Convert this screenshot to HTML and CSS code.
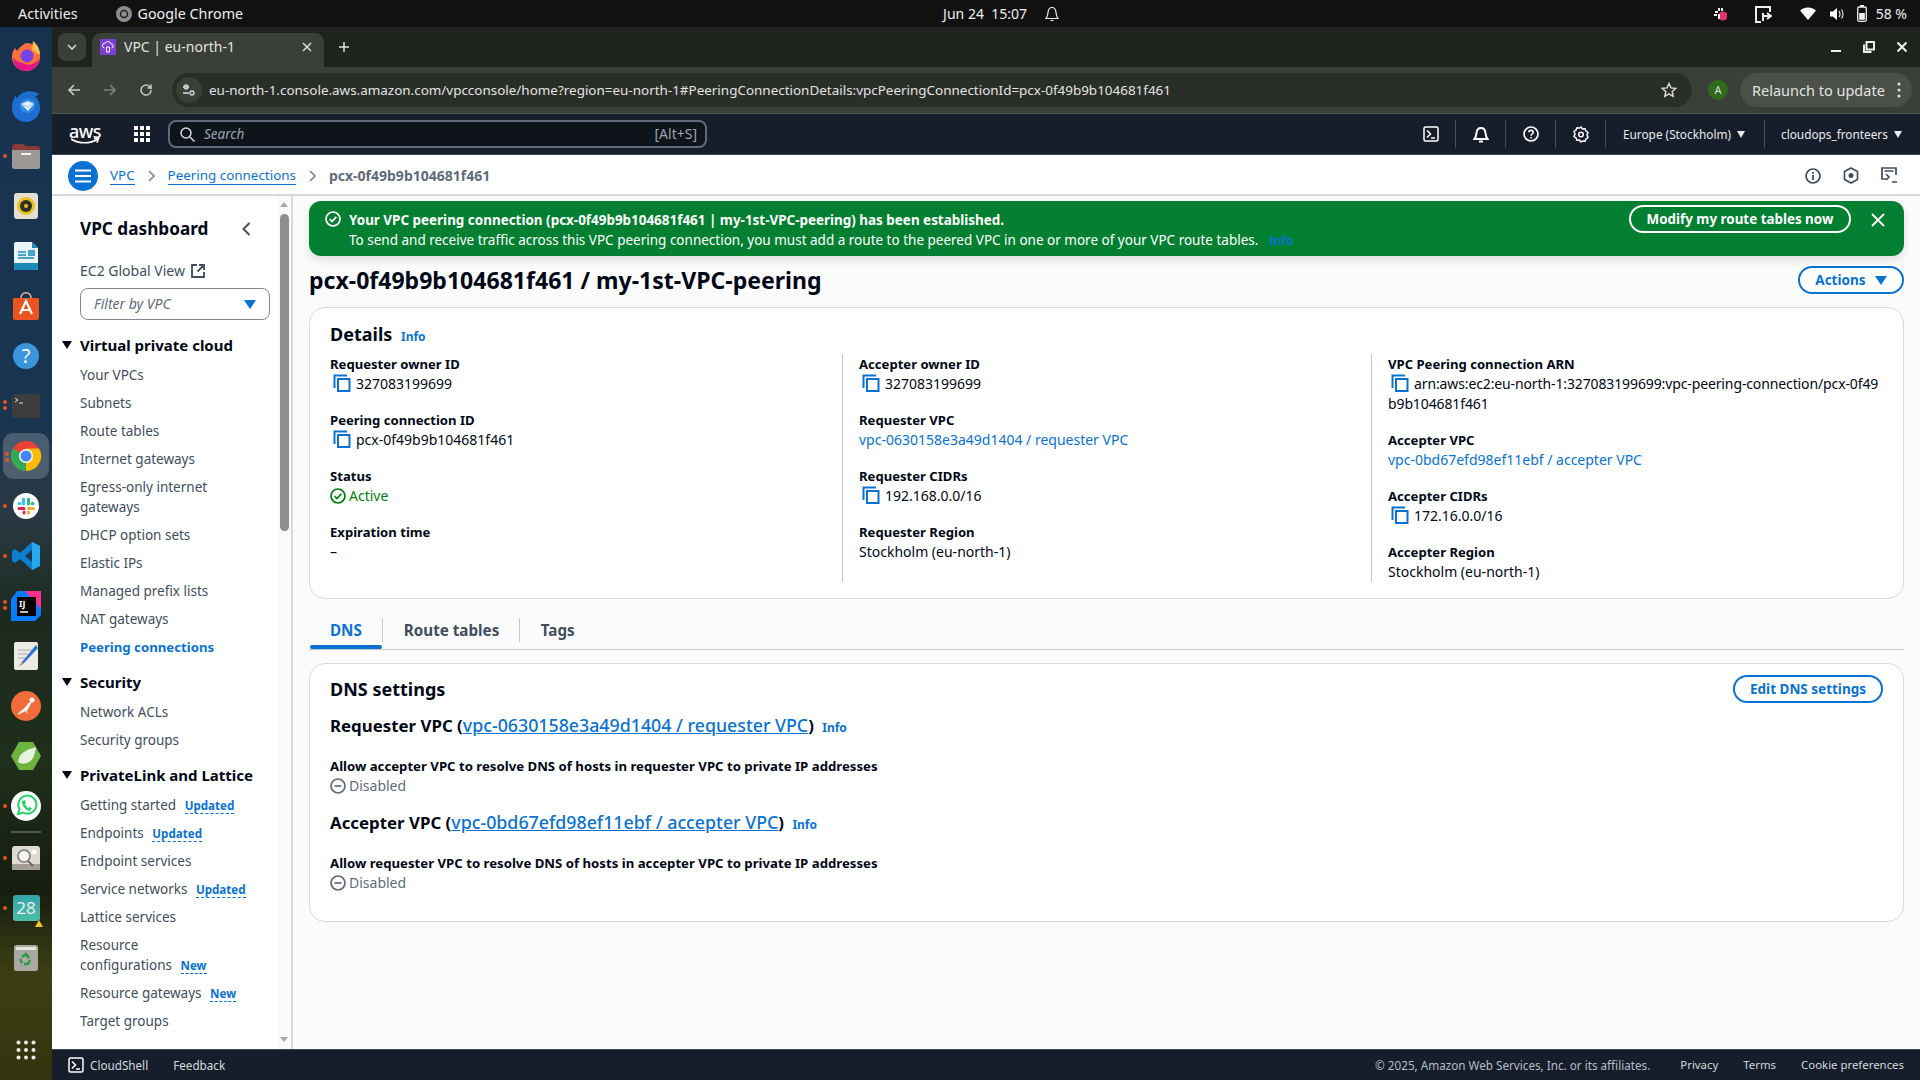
FILE: index.html
```html
<!DOCTYPE html>
<html lang="en">
<head>
    <meta charset="UTF-8">
    <title>VPC | eu-north-1</title>
    <link rel="stylesheet" href="styles.css">
</head>
<body>

<svg class="defs" width="0" height="0">
    <defs>
        <symbol id="copy" viewBox="0 0 18 18"><path d="M1.5 14V1.5H14M5 5h11.5v12H5z" fill="none" stroke="#0972d3" stroke-width="2"/></symbol>
        <symbol id="check" viewBox="0 0 16 16"><circle cx="8" cy="8" r="7" fill="none" stroke="currentColor" stroke-width="1.7"/><path d="M4.7 8.2l2.3 2.3 4.3-4.6" fill="none" stroke="currentColor" stroke-width="1.7"/></symbol>
        <symbol id="minus" viewBox="0 0 16 16"><circle cx="8" cy="8" r="7" fill="none" stroke="currentColor" stroke-width="1.7"/><path d="M4.5 8h7" stroke="currentColor" stroke-width="1.7"/></symbol>
        <symbol id="shell" viewBox="0 0 16 16"><rect x="1" y="1" width="14" height="14" rx="1.5" fill="none" stroke="currentColor" stroke-width="1.5"/><path d="M4 4.5L7.5 8 4 11.5M8 12h4" fill="none" stroke="currentColor" stroke-width="1.5"/></symbol>
    </defs>
</svg>

<!-- ubuntu top bar -->
<div class="topbar">
    <div class="topbar-left">
        <span>Activities</span>
        <span class="app-name">
            <svg width="16" height="16" viewBox="0 0 16 16"><circle cx="8" cy="8" r="8" fill="#8d8d8d"/><circle cx="8" cy="8" r="3.5" fill="none" stroke="#222" stroke-width="1.5"/></svg>
            Google Chrome
        </span>
    </div>
    <div class="topbar-clock">
        <span>Jun 24&nbsp; 15:07</span>
        <svg width="14" height="16" viewBox="0 0 14 16"><path d="M1 12.5h12c-1.5-1.5-1.7-3-2-6C10.700 3.500 9 1.500 7 1.500S3.300 3.500 3 6.500c-.3 3-.5 4.500-2 6zM5.500 14.500h3" fill="none" stroke="#eee" stroke-width="1.2"/></svg>
    </div>
    <div class="topbar-right">
        <svg width="14" height="16" viewBox="0 0 14 16"><circle cx="10" cy="10" r="4.500" fill="#e8316f"/><path d="M2 6h3M6 2v3M6 8v5M1 9h3M9 2v3" stroke="#eee" stroke-width="2"/></svg>
        <svg class="tray-gap" width="18" height="18" viewBox="0 0 18 18"><path d="M7 17H2V2h14v5M9 11h8M9 8v8M13 8l4 3-4 3" fill="none" stroke="#eee" stroke-width="2"/></svg>
        <svg class="tray-wifi" width="16" height="13" viewBox="0 0 16 13"><path d="M0 3.500C4.500-.6 11.500-.6 16 3.500L8 13z" fill="#fff"/></svg>
        <svg width="15" height="14" viewBox="0 0 15 14"><path d="M0 4.500h3L7 1v12L3 9.500H0z" fill="#fff"/><path d="M9 4c1.300 1.500 1.300 4.500 0 6M11.500 2.500c2 2.500 2 6.500 0 9" fill="none" stroke="#ddd" stroke-width="1.200"/></svg>
        <svg width="10" height="17" viewBox="0 0 10 17"><rect x=".7" y="2" width="8.600" height="14.300" rx="1.500" fill="none" stroke="#eee" stroke-width="1.300"/><rect x="3" y="0" width="4" height="2" fill="#eee"/><rect x="2.200" y="8" width="5.600" height="6.800" fill="#eee"/></svg>
        <span class="battery">58 %</span>
    </div>
</div>

<div class="desktop">
    <!-- dock -->
    <div class="dock">
        <div class="dock-slot">
            <svg width="32" height="32" viewBox="0 0 32 32"><path d="M16 3c8 0 14 6 14 14a14 14 0 0 1-28 0c0-4 1.500-7 3-9l2 3c2-3 5-6 9-8z" fill="#ff7139"/><path d="M23 1c5 4 7 9 7 14l-8-5z" fill="#ffbd4f"/><path d="M3 18a13 13 0 0 0 26 0c-3 6-9 8-14 6s-9-3-12-6z" fill="#e31587"/><circle cx="17" cy="16" r="6.500" fill="#7542e5"/></svg>
        </div>
        <div class="dock-slot">
            <svg width="32" height="34" viewBox="0 0 32 34"><path d="M8 8C12 2 22 0 29 5c-1 1-2 2-4 2 3 3 5 7 5 12a14 14 0 0 1-28 0c0-5 1-9 4-13 0 2 0 4 2 2z" fill="#1c6fd0"/><path d="M10 17a8 7 0 0 1 15-3c1 4-2 9-7 10-5 0-8-3-8-7z" fill="#2f8ee6"/><path d="M11 15l7-3 6 3-6 7z" fill="#e4eef8"/><path d="M11 15l7 3 6-3" fill="none" stroke="#9cc4ec"/></svg>
        </div>
        <div class="dock-slot">
            <span class="run-dot"></span>
            <svg width="30" height="28" viewBox="0 0 30 28"><path d="M1 5a3 3 0 0 1 3-3h8l3 2h11a3 3 0 0 1 3 3v4H1z" fill="#8b3a3a"/><path d="M1 8h28v17a2 2 0 0 1-2 2H3a2 2 0 0 1-2-2z" fill="#9a9996"/><rect x="10" y="11" width="10" height="2" fill="#eee"/></svg>
        </div>
        <div class="dock-slot">
            <svg width="24" height="26" viewBox="0 0 24 26"><rect width="24" height="26" rx="3" fill="#e6dfcf"/><circle cx="12" cy="13" r="9" fill="#e5c320"/><circle cx="12" cy="13" r="6" fill="#332f2a"/><circle cx="12" cy="13" r="2" fill="#e5c320"/></svg>
        </div>
        <div class="dock-slot">
            <svg width="24" height="28" viewBox="0 0 24 28"><path d="M2 0h16l6 6v20a2 2 0 0 1-2 2H2a2 2 0 0 1-2-2V2a2 2 0 0 1 2-2z" fill="#e9f3f8"/><path d="M18 0l6 6h-6z" fill="#1c8ab8"/><path d="M0 21h24v5a2 2 0 0 1-2 2H2a2 2 0 0 1-2-2z" fill="#1c8ab8"/><path d="M4 10h8M4 13h8M4 16h16" stroke="#1c8ab8" stroke-width="1.500"/><rect x="14" y="8" width="7" height="6" fill="#4aa3cc"/></svg>
        </div>
        <div class="dock-slot">
            <svg width="28" height="28" viewBox="0 0 28 28"><path d="M2 6h24a1 1 0 0 1 1 1v19a2 2 0 0 1-2 2H3a2 2 0 0 1-2-2V7a1 1 0 0 1 1-1z" fill="#e95420"/><path d="M9 6c0-7 10-7 10 0" fill="none" stroke="#e8b9a0" stroke-width="1.500"/><path d="M8 22l6-13 6 13M10 18h8" fill="none" stroke="#fff" stroke-width="2.200"/></svg>
        </div>
        <div class="dock-slot">
            <div class="dock-help">?</div>
        </div>
        <div class="dock-slot">
            <span class="run-dot two"></span>
            <svg width="28" height="24" viewBox="0 0 28 24"><rect width="28" height="24" rx="3" fill="#3d3d3d"/><path d="M3 4l3 2-3 2M7 9h4" fill="none" stroke="#ddd" stroke-width="1"/></svg>
        </div>
        <div class="dock-slot active">
            <span class="run-dot two"></span>
            <svg width="30" height="30" viewBox="0 0 30 30"><circle cx="15" cy="15" r="15" fill="#ea4335"/><path d="M15 15L2 7.500A15 15 0 0 0 15 30z" fill="#34a853"/><path d="M15 15V30A15 15 0 0 0 28 7.500H15z" fill="#fbbc05"/><circle cx="15" cy="15" r="7" fill="#fff"/><circle cx="15" cy="15" r="5.500" fill="#4285f4"/></svg>
        </div>
        <div class="dock-slot">
            <span class="run-dot"></span>
            <svg width="26" height="26" viewBox="0 0 26 26"><circle cx="13" cy="13" r="13" fill="#fff"/><path d="M6 15.500h5M11 20v-1" stroke="#e01e5a" stroke-width="3" stroke-linecap="round"/><path d="M10.500 6v5M6 10.500h1" stroke="#36c5f0" stroke-width="3" stroke-linecap="round"/><path d="M15.500 6v5M20 10.500h-1" stroke="#2eb67d" stroke-width="3" stroke-linecap="round"/><path d="M15.500 15.500h5M15.500 20v-1" stroke="#ecb22e" stroke-width="3" stroke-linecap="round"/></svg>
        </div>
        <div class="dock-slot">
            <span class="run-dot"></span>
            <svg width="28" height="28" viewBox="0 0 28 28"><path d="M20 0l8 4v20l-8 4L8 17l-5 4-3-2V9l3-2 5 4z" fill="#0b7fcf"/><path d="M20 0l8 4v20l-8 4z" fill="#27a7f0"/><path d="M20 8l-7 6 7 6z" fill="#1a3550"/></svg>
        </div>
        <div class="dock-slot">
            <span class="run-dot two"></span>
            <svg width="30" height="30" viewBox="0 0 30 30"><path d="M6 0h24v24l-6 6H0V8z" fill="#087cfa"/><path d="M14 0h16v18z" fill="#ff318c"/><rect x="6" y="6" width="19" height="19" fill="#000"/><path d="M9 21h8" stroke="#fff" stroke-width="1.500"/><text x="8" y="16" class="ij">IJ</text></svg>
        </div>
        <div class="dock-slot">
            <svg width="24" height="28" viewBox="0 0 24 28"><rect width="24" height="28" rx="2" fill="#eceae4"/><path d="M4 8h14M4 12h10M4 16h8" stroke="#aaa"/><path d="M22 3L8 20l-3 4 4-2L24 6z" fill="#2a6fd6"/><path d="M8 20l-3 4 4-2z" fill="#e8a33d"/></svg>
        </div>
        <div class="dock-slot">
            <svg width="30" height="30" viewBox="0 0 30 30"><circle cx="15" cy="15" r="15" fill="#f26b3a"/><circle cx="21" cy="9" r="2.500" fill="#fff"/><path d="M19 11l-5 6-7 6 9-4 4-7zM14 17l2 5" fill="#fff" stroke="#fff"/></svg>
        </div>
        <div class="dock-slot">
            <svg width="30" height="28" viewBox="0 0 30 28"><path d="M8 0h14l8 14-8 14H8L0 14z" fill="#6cb33f"/><path d="M7 20C8 11 15 8 25 5c-1 8-3 14-9 16-3 1-6 1-9-1z" fill="#e6f3dd"/></svg>
        </div>
        <div class="dock-slot">
            <span class="run-dot"></span>
            <svg width="30" height="30" viewBox="0 0 30 30"><circle cx="15" cy="15" r="15" fill="#fff"/><path d="M7 23l1.500-5a9 9 0 1 1 3.500 3.500z" fill="none" stroke="#25d366" stroke-width="2"/><path d="M11 10c0 5 3 9 8 10l2-3-3-1-1 1c-1-1-2-2-3-4l1-1-1-3z" fill="#25d366"/></svg>
        </div>
        <div class="dock-sep"></div>
        <div class="dock-slot">
            <span class="run-dot"></span>
            <svg width="28" height="24" viewBox="0 0 28 24"><rect width="28" height="24" rx="3" fill="#dedbd2"/><rect y="18" width="28" height="6" fill="#a29f92"/><circle cx="12" cy="10" r="6" fill="#f5f5f0" stroke="#777" stroke-width="1.500"/><path d="M16 15l5 5" stroke="#666" stroke-width="2"/><circle cx="22" cy="6" r="2.500" fill="#fff"/></svg>
        </div>
        <div class="dock-slot">
            <span class="run-dot"></span>
            <div class="dock-cal">28</div>
            <span class="dock-warn"></span>
        </div>
        <div class="dock-slot">
            <svg width="24" height="26" viewBox="0 0 24 26"><rect width="24" height="26" rx="2.500" fill="#a9a9a2"/><rect x="2" y="2" width="20" height="3" fill="#e4e4df"/><path d="M8 12l4-3 3 4M16 15l-2 4h-4M8 18l-2-4" fill="none" stroke="#2c9a3f" stroke-width="2.400"/></svg>
        </div>
        <div class="dock-slot dock-apps">
            <svg width="20" height="20" viewBox="0 0 20 20" fill="#eee"><circle cx="2.500" cy="2.500" r="2"/><circle cx="10" cy="2.500" r="2"/><circle cx="17.500" cy="2.500" r="2"/><circle cx="2.500" cy="10" r="2"/><circle cx="10" cy="10" r="2"/><circle cx="17.500" cy="10" r="2"/><circle cx="2.500" cy="17.500" r="2"/><circle cx="10" cy="17.500" r="2"/><circle cx="17.500" cy="17.500" r="2"/></svg>
        </div>
    </div>

    <div class="window">
        <!-- chrome -->
        <div class="tabstrip">
            <div class="tab-menu">
                <svg width="10" height="6" viewBox="0 0 10 6"><path d="M1 1l4 4 4-4" fill="none" stroke="#ddd" stroke-width="1.500"/></svg>
            </div>
            <div class="tab">
                <svg width="16" height="16" viewBox="0 0 16 16"><rect width="16" height="16" rx="1" fill="#7b3fd6"/><path d="M4.500 9a2.500 2.500 0 0 1 1-5 3 3 0 0 1 5.500 1 2 2 0 0 1 .5 4M6.500 8h3v5h-3z" fill="none" stroke="#fff"/></svg>
                <span class="tab-title">VPC | eu-north-1</span>
                <svg width="10" height="10" viewBox="0 0 10 10"><path d="M1 1l8 8M9 1l-8 8" stroke="#ddd" stroke-width="1.500"/></svg>
            </div>
            <svg class="tab-plus" width="12" height="12" viewBox="0 0 12 12"><path d="M6 1v10M1 6h10" stroke="#ddd" stroke-width="1.500"/></svg>
            <div class="win-controls">
                <svg width="12" height="12" viewBox="0 0 12 12"><path d="M1 10h10" stroke="#eee" stroke-width="2"/></svg>
                <svg width="12" height="12" viewBox="0 0 12 12"><path d="M3.500 1h7.500v7.500H3.500zM1 3.500V11h7.500" fill="none" stroke="#eee" stroke-width="2"/></svg>
                <svg width="12" height="12" viewBox="0 0 12 12"><path d="M1.500 1.500l9 9M10.500 1.500l-9 9" stroke="#eee" stroke-width="2"/></svg>
            </div>
        </div>

        <div class="toolbar">
            <div class="nav-btns">
                <svg width="14" height="14" viewBox="0 0 14 14"><path d="M13 7H2M7 2L2 7l5 5" fill="none" stroke="#c9ccc7" stroke-width="1.600"/></svg>
                <svg width="14" height="14" viewBox="0 0 14 14"><path d="M1 7h11M7 2l5 5-5 5" fill="none" stroke="#7f827d" stroke-width="1.600"/></svg>
                <svg width="14" height="14" viewBox="0 0 14 14"><path d="M12 7a5 5 0 1 1-1.500-3.500L12 5V1.500M12 5H8.500" fill="none" stroke="#c9ccc7" stroke-width="1.500"/></svg>
            </div>
            <div class="urlbar">
                <span class="site-btn">
                    <svg width="14" height="14" viewBox="0 0 14 14"><path d="M1 4h6M1 10h6" stroke="#ddd" stroke-width="1.300"/><circle cx="10" cy="10" r="2" fill="none" stroke="#ddd" stroke-width="1.300"/><circle cx="4" cy="4" r="2" fill="none" stroke="#ddd" stroke-width="1.300"/></svg>
                </span>
                <span class="url">eu-north-1.console.aws.amazon.com/vpcconsole/home?region=eu-north-1#PeeringConnectionDetails:vpcPeeringConnectionId=pcx-0f49b9b104681f461</span>
                <svg width="16" height="16" viewBox="0 0 16 16"><path d="M8 1.500l2 4.400 4.700.5-3.500 3.200 1 4.700L8 11.900l-4.200 2.400 1-4.700L1.300 6.400 6 5.900z" fill="none" stroke="#ddd" stroke-width="1.400"/></svg>
            </div>
            <span class="avatar">A</span>
            <div class="relaunch">
                <span>Relaunch to update</span>
                <svg width="4" height="16" viewBox="0 0 4 16" fill="#ddd"><circle cx="2" cy="2" r="1.600"/><circle cx="2" cy="8" r="1.600"/><circle cx="2" cy="14" r="1.600"/></svg>
            </div>
        </div>

        <!-- aws nav -->
        <div class="awsnav">
            <div class="aws-logo">
                <span>aws</span>
                <svg width="30" height="7" viewBox="0 0 30 7"><path d="M1 1c8 5 19 5 27 0M24 .5l4.500.3-1.500 4" fill="none" stroke="#fff" stroke-width="1.500"/></svg>
            </div>
            <svg class="aws-grid" width="16" height="16" viewBox="0 0 16 16" fill="#fff"><rect width="4" height="4"/><rect x="6" width="4" height="4"/><rect x="12" width="4" height="4"/><rect y="6" width="4" height="4"/><rect x="6" y="6" width="4" height="4"/><rect x="12" y="6" width="4" height="4"/><rect y="12" width="4" height="4"/><rect x="6" y="12" width="4" height="4"/><rect x="12" y="12" width="4" height="4"/></svg>
            <div class="aws-search">
                <svg width="15" height="15" viewBox="0 0 15 15"><circle cx="6" cy="6" r="5" fill="none" stroke="#d5dbdb" stroke-width="1.500"/><path d="M10 10l4.500 4.500" stroke="#d5dbdb" stroke-width="1.500"/></svg>
                <span class="aws-search-text">Search</span>
                <span class="aws-search-key">[Alt+S]</span>
            </div>
            <div class="aws-right">
                <span class="aws-item"><svg class="ic16" width="16" height="16"><use href="#shell"/></svg></span>
                <span class="aws-item">
                    <svg width="16" height="17" viewBox="0 0 16 17"><path d="M1.500 13h13c-1.500-1.500-1.700-3-2-6C12.200 4 10.500 2 8 2S3.800 4 3.500 7c-.3 3-.5 4.500-2 6zM6 15.500h4" fill="none" stroke="#fff" stroke-width="2"/></svg>
                </span>
                <span class="aws-item">
                    <svg width="16" height="16" viewBox="0 0 16 16"><circle cx="8" cy="8" r="7" fill="none" stroke="#fff" stroke-width="1.700"/><path d="M5.800 6.200C5.800 3.700 10.200 3.700 10.200 6.200 10.200 8 8 8 8 9.800M8 11v1.500" fill="none" stroke="#fff" stroke-width="1.600"/></svg>
                </span>
                <span class="aws-item">
                    <svg width="16" height="17" viewBox="0 0 16 17"><path d="M8 1l1.500 2 2.500-.3 1 2.300 2 1.500-1 2.500 1 2.500-2 1.500-1 2.300-2.500-.3L8 16l-1.500-2-2.500.3-1-2.300-2-1.500 1-2.500-1-2.500 2-1.500 1-2.300 2.500.3z" fill="none" stroke="#fff" stroke-width="1.500"/><circle cx="8" cy="8.500" r="2.300" fill="none" stroke="#fff" stroke-width="1.500"/></svg>
                </span>
                <span class="aws-menu region">Europe (Stockholm) <i class="caret"></i></span>
                <span class="aws-menu user">cloudops_fronteers <i class="caret"></i></span>
            </div>
        </div>

        <!-- breadcrumbs -->
        <div class="crumbs">
            <span class="menu-btn">
                <svg width="16" height="14" viewBox="0 0 16 14"><path d="M0 1.500h16M0 7h16M0 12.500h16" stroke="#fff" stroke-width="2.200"/></svg>
            </span>
            <a class="crumb-link">VPC</a>
            <svg class="chev" width="7" height="12" viewBox="0 0 7 12"><path d="M1 1l5 5-5 5" fill="none" stroke="#7d8998" stroke-width="1.600"/></svg>
            <a class="crumb-link">Peering connections</a>
            <svg class="chev" width="7" height="12" viewBox="0 0 7 12"><path d="M1 1l5 5-5 5" fill="none" stroke="#7d8998" stroke-width="1.600"/></svg>
            <span class="crumb-current">pcx-0f49b9b104681f461</span>
            <div class="crumb-tools">
                <svg width="16" height="16" viewBox="0 0 16 16"><circle cx="8" cy="8" r="7" fill="none" stroke="#414d5c" stroke-width="1.700"/><path d="M8 7v5M8 4v1.700" stroke="#414d5c" stroke-width="1.800"/></svg>
                <svg width="16" height="17" viewBox="0 0 16 17"><path d="M8 1l6.500 3.500v8L8 16l-6.500-3.500v-8z" fill="none" stroke="#414d5c" stroke-width="1.700"/><circle cx="8" cy="8.500" r="2.500" fill="#414d5c"/></svg>
                <svg width="17" height="17" viewBox="0 0 17 17"><path d="M5 12H1V1h14v7" fill="none" stroke="#414d5c" stroke-width="1.700"/><path d="M3.500 4h9M5 7l3 3-3 3M11 15h5" fill="none" stroke="#414d5c" stroke-width="1.700"/></svg>
            </div>
        </div>

        <div class="main">
            <!-- side navigation -->
            <div class="sidenav">
                <div class="sidenav-inner">
                    <div class="sn-head">
                        <h2>VPC dashboard</h2>
                        <svg width="9" height="14" viewBox="0 0 9 14"><path d="M7.500 1l-6 6 6 6" fill="none" stroke="#414d5c" stroke-width="2"/></svg>
                    </div>
                    <div class="sn-ext">
                        <span>EC2 Global View</span>
                        <svg width="14" height="14" viewBox="0 0 14 14"><path d="M6 1H1v12h12V8M8 1h5v5M13 1L6.500 7.500" fill="none" stroke="#414d5c" stroke-width="1.800"/></svg>
                    </div>
                    <div class="sn-filter">
                        <span>Filter by VPC</span>
                        <i class="caret blue"></i>
                    </div>

                    <h3 class="sn-group"><i class="caret dark"></i>Virtual private cloud</h3>
                    <a class="sn-link">Your VPCs</a>
                    <a class="sn-link">Subnets</a>
                    <a class="sn-link">Route tables</a>
                    <a class="sn-link">Internet gateways</a>
                    <a class="sn-link">Egress-only internet gateways</a>
                    <a class="sn-link">DHCP option sets</a>
                    <a class="sn-link">Elastic IPs</a>
                    <a class="sn-link">Managed prefix lists</a>
                    <a class="sn-link">NAT gateways</a>
                    <a class="sn-link current">Peering connections</a>

                    <h3 class="sn-group"><i class="caret dark"></i>Security</h3>
                    <a class="sn-link">Network ACLs</a>
                    <a class="sn-link">Security groups</a>

                    <h3 class="sn-group"><i class="caret dark"></i>PrivateLink and Lattice</h3>
                    <a class="sn-link">Getting started <b class="badge">Updated</b></a>
                    <a class="sn-link">Endpoints <b class="badge">Updated</b></a>
                    <a class="sn-link">Endpoint services</a>
                    <a class="sn-link">Service networks <b class="badge">Updated</b></a>
                    <a class="sn-link">Lattice services</a>
                    <a class="sn-link">Resource<br>configurations <b class="badge">New</b></a>
                    <a class="sn-link">Resource gateways <b class="badge">New</b></a>
                    <a class="sn-link">Target groups</a>
                </div>
                <div class="sn-scroll">
                    <i class="arrow up"></i>
                    <div class="thumb"></div>
                    <i class="arrow down"></i>
                </div>
            </div>

            <div class="content">
                <div class="flash">
                    <svg class="flash-icon" width="16" height="16"><use href="#check"/></svg>
                    <div class="flash-text">
                        <strong>Your VPC peering connection (pcx-0f49b9b104681f461 | my-1st-VPC-peering) has been established.</strong>
                        <p>To send and receive traffic across this VPC peering connection, you must add a route to the peered VPC in one or more of your VPC route tables. <a class="flash-info">Info</a></p>
                    </div>
                    <button class="flash-btn">Modify my route tables now</button>
                    <svg class="flash-close" width="14" height="14" viewBox="0 0 14 14"><path d="M1 1l12 12M13 1L1 13" stroke="#fff" stroke-width="1.800"/></svg>
                </div>

                <div class="page-head">
                    <h1>pcx-0f49b9b104681f461 / my-1st-VPC-peering</h1>
                    <button class="btn">Actions <i class="caret blue"></i></button>
                </div>

                <div class="card details">
                    <h2 class="card-title">Details <a class="info">Info</a></h2>
                    <div class="columns">
                        <div class="col">
                            <div class="kv"><label>Requester owner ID</label><div><svg class="copy" width="18" height="18"><use href="#copy"/></svg>327083199699</div></div>
                            <div class="kv"><label>Peering connection ID</label><div><svg class="copy" width="18" height="18"><use href="#copy"/></svg>pcx-0f49b9b104681f461</div></div>
                            <div class="kv"><label>Status</label><div class="active"><svg class="status" width="16" height="16"><use href="#check"/></svg>Active</div></div>
                            <div class="kv"><label>Expiration time</label><div>–</div></div>
                        </div>
                        <div class="col">
                            <div class="kv"><label>Accepter owner ID</label><div><svg class="copy" width="18" height="18"><use href="#copy"/></svg>327083199699</div></div>
                            <div class="kv"><label>Requester VPC</label><div><a class="plain-link">vpc-0630158e3a49d1404 / requester VPC</a></div></div>
                            <div class="kv"><label>Requester CIDRs</label><div><svg class="copy" width="18" height="18"><use href="#copy"/></svg>192.168.0.0/16</div></div>
                            <div class="kv"><label>Requester Region</label><div>Stockholm (eu-north-1)</div></div>
                        </div>
                        <div class="col">
                            <div class="kv"><label>VPC Peering connection ARN</label><div class="arn"><svg class="copy" width="18" height="18"><use href="#copy"/></svg>arn:aws:ec2:eu-north-1:327083199699:vpc-peering-connection/pcx-0f49<br>b9b104681f461</div></div>
                            <div class="kv"><label>Accepter VPC</label><div><a class="plain-link">vpc-0bd67efd98ef11ebf / accepter VPC</a></div></div>
                            <div class="kv"><label>Accepter CIDRs</label><div><svg class="copy" width="18" height="18"><use href="#copy"/></svg>172.16.0.0/16</div></div>
                            <div class="kv"><label>Accepter Region</label><div>Stockholm (eu-north-1)</div></div>
                        </div>
                    </div>
                </div>

                <div class="tabs">
                    <span class="tab-item selected">DNS</span>
                    <span class="tab-item">Route tables</span>
                    <span class="tab-item last">Tags</span>
                </div>

                <div class="card dns">
                    <div class="dns-head">
                        <h2 class="card-title">DNS settings</h2>
                        <button class="btn">Edit DNS settings</button>
                    </div>
                    <h3 class="dns-sub">Requester VPC (<a>vpc-0630158e3a49d1404 / requester VPC</a>) <a class="info">Info</a></h3>
                    <div class="dns-row">
                        <label>Allow accepter VPC to resolve DNS of hosts in requester VPC to private IP addresses</label>
                        <div class="disabled"><svg class="status" width="16" height="16"><use href="#minus"/></svg>Disabled</div>
                    </div>
                    <h3 class="dns-sub">Accepter VPC (<a>vpc-0bd67efd98ef11ebf / accepter VPC</a>) <a class="info">Info</a></h3>
                    <div class="dns-row">
                        <label>Allow requester VPC to resolve DNS of hosts in accepter VPC to private IP addresses</label>
                        <div class="disabled"><svg class="status" width="16" height="16"><use href="#minus"/></svg>Disabled</div>
                    </div>
                </div>
            </div>
        </div>

        <!-- console footer -->
        <div class="footer">
            <svg class="ic16" width="16" height="16"><use href="#shell"/></svg>
            <span class="foot-shell">CloudShell</span>
            <span class="foot-feedback">Feedback</span>
            <span class="foot-copy">© 2025, Amazon Web Services, Inc. or its affiliates.</span>
            <span class="foot-link">Privacy</span>
            <span class="foot-link">Terms</span>
            <span class="foot-link">Cookie preferences</span>
        </div>
    </div>
</div>

</body>
</html>
```

FILE: styles.css
```css
* {
    margin: 0;
    padding: 0;
    box-sizing: border-box;
}

body {
    width: 1920px;
    height: 1080px;
    overflow: hidden;
    font-family: "Noto Sans", sans-serif;
    font-size: 14px;
    line-height: 20px;
    color: #000716;
    display: flex;
    flex-direction: column;
}

.defs {
    position: absolute;
}

/* ubuntu top bar */
.topbar {
    height: 27px;
    flex: none;
    background-color: #111;
    color: #eee;
    display: flex;
    align-items: center;
    position: relative;
    font-size: 14.3px;
}

.topbar-left {
    display: flex;
    align-items: center;
    gap: 38px;
    padding-left: 18px;
}

.app-name {
    display: flex;
    align-items: center;
    gap: 6px;
}

.topbar-clock {
    display: flex;
    align-items: center;
    gap: 18px;
    margin-left: 700px;
    font-size: 14px;
}

.topbar-right {
    margin-left: auto;
    padding-right: 13px;
    display: flex;
    align-items: center;
    gap: 12px;
    font-size: 14px;
}

.tray-gap {
    margin: 0 16px 0 15px;
}

.tray-wifi {
    margin-right: 2px;
}

.battery {
    margin-left: -3px;
}

.desktop {
    flex: 1;
    display: flex;
    min-height: 0;
}

/* dock */
.dock {
    width: 52px;
    flex: none;
    display: flex;
    flex-direction: column;
    padding-top: 4px;
    background: linear-gradient(180deg, #17324f 0%, #1a3550 38%, #2a3a45 46%, #1c2a1e 56%, #1f2f1b 70%, #161d10 82%, #3c3f14 90%, #33340f 100%);
}

.dock-slot {
    height: 50px;
    flex: none;
    display: flex;
    align-items: center;
    justify-content: center;
    position: relative;
}

.dock-slot.active {
    background-color: rgba(255, 255, 255, 0.2);
    border-radius: 10px;
    margin: 2px 3px;
    height: 46px;
}

.dock-slot.active .run-dot {
    left: 2px;
}

.run-dot {
    position: absolute;
    left: 3px;
    top: 23px;
    width: 4px;
    height: 4px;
    border-radius: 50%;
    background-color: #e95420;
}

.run-dot.two {
    top: 19px;
    box-shadow: 0 6px 0 #e95420;
}

.dock-help {
    width: 26px;
    height: 26px;
    border-radius: 50%;
    background-color: #3b95dc;
    color: #fff;
    text-align: center;
    font-size: 20px;
    line-height: 26px;
}

.dock-cal {
    width: 27px;
    height: 26px;
    border-radius: 3px;
    background: linear-gradient(180deg, #35a1a8, #4bbfa8);
    color: #eee;
    text-align: center;
    font-size: 17px;
    line-height: 26px;
}

.dock-warn {
    position: absolute;
    right: 9px;
    bottom: 6px;
    width: 0;
    height: 0;
    border-left: 4px solid transparent;
    border-right: 4px solid transparent;
    border-bottom: 7px solid #f3c623;
}

.dock-sep {
    height: 2px;
    flex: none;
    margin: 0 11px;
    background-color: rgba(255, 255, 255, 0.25);
}

.dock-apps {
    margin-top: auto;
    margin-bottom: 5px;
}

.ij {
    fill: #fff;
    font-size: 9px;
    font-weight: 700;
}

/* chrome */
.window {
    flex: 1;
    min-width: 0;
    display: flex;
    flex-direction: column;
    background-color: #fff;
}

.tabstrip {
    height: 40px;
    flex: none;
    background-color: #1f231e;
    display: flex;
    align-items: flex-end;
    padding-left: 6px;
    color: #e3e3e3;
}

.tab-menu {
    width: 28px;
    height: 28px;
    margin-bottom: 6px;
    background-color: #3a3f38;
    border-radius: 8px;
    display: flex;
    align-items: center;
    justify-content: center;
}

.tab {
    width: 232px;
    height: 34px;
    margin-left: 6px;
    padding: 0 12px 6px 8px;
    background-color: #3a3f38;
    border-radius: 9px 9px 0 0;
    display: flex;
    align-items: center;
}

.tab-title {
    flex: 1;
    margin-left: 8px;
    font-size: 14px;
}

.tab-plus {
    margin: 0 0 14px 14px;
}

.win-controls {
    margin-left: auto;
    display: flex;
    gap: 21px;
    padding: 0 12px 0 0;
    margin-bottom: 14px;
}

.toolbar {
    height: 47px;
    flex: none;
    background-color: #3a3f38;
    display: flex;
    align-items: center;
    padding-left: 15px;
    border-bottom: 1px solid #50544e;
    color: #e3e3e3;
}

.nav-btns {
    display: flex;
    gap: 22px;
    width: 105px;
}

.urlbar {
    width: 1520px;
    height: 34px;
    background-color: #2a2e28;
    border-radius: 17px;
    display: flex;
    align-items: center;
    padding: 0 15px 0 4px;
}

.site-btn {
    width: 26px;
    height: 26px;
    border-radius: 50%;
    background-color: #3a3f38;
    display: flex;
    align-items: center;
    justify-content: center;
}

.url {
    flex: 1;
    margin-left: 7px;
    font-size: 13.45px;
    color: #e3e3e3;
    white-space: nowrap;
}

.avatar {
    width: 20px;
    height: 20px;
    margin-left: 16px;
    border-radius: 50%;
    background-color: #2f6b1a;
    color: #ddd;
    font-size: 11px;
    line-height: 20px;
    text-align: center;
}

.relaunch {
    width: 172px;
    height: 34px;
    margin-left: 12px;
    padding: 0 11px 0 12px;
    background-color: #4a4f48;
    border-radius: 17px;
    display: flex;
    align-items: center;
    justify-content: space-between;
    font-size: 14.5px;
}

/* aws nav */
.awsnav {
    height: 41px;
    flex: none;
    background-color: #161d2b;
    display: flex;
    align-items: center;
    padding-left: 16px;
    color: #d5dbdb;
    border-bottom: 1px solid #414750;
}

.aws-logo {
    width: 34px;
    display: flex;
    flex-direction: column;
    align-items: center;
    color: #fff;
    font-size: 18px;
    font-weight: 500;
    line-height: 15px;
    letter-spacing: -0.5px;
}

.aws-logo svg {
    margin-top: -1px;
}

.aws-grid {
    margin-left: 32px;
    margin-right: 18px;
}

.aws-search {
    width: 539px;
    height: 28px;
    border: 2px solid #5f6b7a;
    border-radius: 8px;
    background-color: #0f141a;
    display: flex;
    align-items: center;
    padding: 0 8px 0 10px;
}

.aws-search-text {
    margin-left: 9px;
    font-size: 13.5px;
    font-style: italic;
    color: #9ba7b6;
}

.aws-search-key {
    margin-left: auto;
    font-size: 14px;
    color: #9ba7b6;
}

.aws-right {
    margin-left: auto;
    display: flex;
    align-items: center;
    height: 28px;
    font-size: 11.8px;
    color: #e9ebed;
}

.aws-item {
    width: 50px;
    height: 28px;
    border-right: 1px solid #414d5c;
    display: flex;
    align-items: center;
    justify-content: center;
    color: #fff;
}

.aws-menu {
    height: 28px;
    display: flex;
    align-items: center;
    gap: 6px;
    white-space: nowrap;
}

.region {
    width: 159px;
    padding-left: 17px;
    border-right: 1px solid #414d5c;
}

.user {
    width: 155px;
    padding-left: 16px;
}

.caret {
    display: inline-block;
    width: 0;
    height: 0;
    border-left: 4px solid transparent;
    border-right: 4px solid transparent;
    border-top: 7px solid currentColor;
}

.caret.blue {
    border-left-width: 6px;
    border-right-width: 6px;
    border-top: 9px solid #0972d3;
}

.ic16 {
    color: #fff;
}

/* breadcrumbs */
.crumbs {
    height: 41px;
    flex: none;
    background-color: #fff;
    border-bottom: 2px solid #d5dbdb;
    display: flex;
    align-items: center;
    padding: 2px 0 0 16px;
    font-size: 13.4px;
}

.menu-btn {
    width: 30px;
    height: 30px;
    border-radius: 50%;
    background-color: #0972d3;
    display: flex;
    align-items: center;
    justify-content: center;
    margin-right: 12px;
}

.crumb-link {
    color: #0972d3;
    border-bottom: 1px solid #0972d3;
    line-height: 18px;
}

.chev {
    margin: 0 13px;
}

.crumb-current {
    color: #5f6b7a;
    font-weight: 700;
    font-size: 14px;
}

.crumb-tools {
    margin-left: auto;
    padding-right: 22px;
    display: flex;
    align-items: center;
    gap: 22px;
}

/* main area */
.main {
    flex: 1;
    display: flex;
    min-height: 0;
    background-color: #fbfbfb;
}

.sidenav {
    width: 241px;
    flex: none;
    display: flex;
    border-right: 2px solid #d5dbdb;
    overflow: hidden;
}

.sidenav-inner {
    width: 225px;
    flex: none;
    background-color: #fff;
    padding: 19px 0 0 28px;
    overflow: hidden;
}

.sn-head {
    display: flex;
    align-items: center;
    justify-content: space-between;
    padding-right: 26px;
    height: 28px;
}

.sn-head h2 {
    font-size: 17.2px;
    font-weight: 700;
    line-height: 28px;
}

.sn-ext {
    display: flex;
    align-items: center;
    gap: 6px;
    margin-top: 18px;
    color: #414d5c;
}

.sn-filter {
    width: 190px;
    height: 32px;
    margin-top: 7px;
    padding: 0 13px;
    border: 1px solid #7d8998;
    border-radius: 8px;
    display: flex;
    align-items: center;
    justify-content: space-between;
    font-style: italic;
    font-size: 14px;
    color: #5f6b7a;
}

.sn-group {
    position: relative;
    font-size: 15px;
    font-weight: 700;
    line-height: 22px;
    margin-top: 14px;
    margin-bottom: 9px;
}

.caret.dark {
    position: absolute;
    left: -18px;
    top: 7px;
    border-left-width: 5px;
    border-right-width: 5px;
    border-top: 8px solid #000716;
}

.sn-link {
    display: block;
    width: 172px;
    margin-bottom: 8px;
    font-size: 13.5px;
    color: #414d5c;
}

.sn-link.current {
    color: #0972d3;
    font-weight: 700;
    font-size: 13.2px;
    width: 190px;
}

.badge {
    margin-left: 5px;
    font-size: 11.6px;
    line-height: 14px;
    color: #0972d3;
    border-bottom: 1px dashed #0972d3;
}

.sn-scroll {
    flex: 1;
    position: relative;
    background-color: #fafafa;
}

.thumb {
    position: absolute;
    left: 3px;
    top: 18px;
    width: 9px;
    height: 317px;
    border-radius: 5px;
    background-color: #8f8f8f;
}

.arrow {
    position: absolute;
    left: 3px;
    width: 0;
    height: 0;
    border-left: 4.5px solid transparent;
    border-right: 4.5px solid transparent;
}

.arrow.up {
    top: 6px;
    border-bottom: 5px solid #a8a8a8;
}

.arrow.down {
    bottom: 7px;
    border-top: 5px solid #a8a8a8;
}

.content {
    flex: 1;
    min-width: 0;
    padding: 5px 16px 0 16px;
}

.flash {
    height: 55px;
    background-color: #037f31;
    border-radius: 12px;
    box-shadow: 0 4px 8px rgba(0, 0, 0, 0.12);
    color: #fff;
    display: flex;
    align-items: flex-start;
    padding: 4px 19px 0 16px;
    font-size: 13.5px;
}

.flash-icon {
    margin: 6px 8px 0 0;
    flex: none;
    color: #fff;
}

.flash-text {
    flex: 1;
    padding-top: 5px;
}

.flash-text strong {
    display: block;
    font-size: 13.45px;
}

.flash-text p {
    white-space: nowrap;
}

.flash-info {
    margin-left: 7px;
    color: #0972d3;
    font-size: 12px;
    font-weight: 700;
}

.flash-btn {
    width: 222px;
    height: 28px;
    margin-right: 20px;
    background: transparent;
    border: 2px solid #fff;
    border-radius: 14px;
    color: #fff;
    font-family: inherit;
    font-size: 13.4px;
    font-weight: 700;
}

.flash-close {
    margin-top: 8px;
}

.page-head {
    display: flex;
    align-items: center;
    justify-content: space-between;
    margin-top: 10px;
    height: 28px;
}

.page-head h1 {
    font-size: 23.05px;
    font-weight: 700;
    line-height: 28px;
}

.btn {
    height: 28px;
    padding: 0 15px;
    background-color: #fff;
    border: 2px solid #0972d3;
    border-radius: 14px;
    color: #0972d3;
    font-family: inherit;
    font-size: 13.5px;
    font-weight: 700;
}

.btn .caret {
    margin-left: 6px;
}

.card {
    background-color: #fff;
    border: 1px solid #d5dbdb;
    border-radius: 16px;
    padding: 0 20px;
}

.details {
    height: 292px;
    margin-top: 13px;
    padding-top: 13px;
}

.card-title {
    font-size: 18px;
    font-weight: 700;
    line-height: 26px;
}

.info {
    margin-left: 4px;
    font-size: 12px;
    font-weight: 700;
    color: #0972d3;
}

.columns {
    display: grid;
    grid-template-columns: 529px 529px 1fr;
    margin-top: 4px;
}

.col {
    height: 228px;
    padding-left: 16px;
    border-left: 1px solid #c6c6cd;
}

.col:first-child {
    padding-left: 0;
    border-left: none;
}

.col:nth-child(2),
.col:nth-child(3) {
    margin-left: -17px;
    margin-right: 17px;
}

.kv {
    margin-bottom: 16px;
}

.kv label {
    display: block;
    font-size: 13.1px;
    font-weight: 700;
}

.copy {
    margin: 0 5px 0 3px;
    vertical-align: -3px;
}

.status {
    margin-right: 3px;
    vertical-align: -3px;
}

.active {
    color: #037f0c;
}

.arn {
    white-space: nowrap;
    letter-spacing: -0.12px;
}

.plain-link {
    color: #0972d3;
}

.tabs {
    height: 39px;
    margin-top: 12px;
    display: flex;
    align-items: center;
    border-bottom: 1px solid #c6c6cd;
    padding-left: 1px;
    font-size: 15.2px;
    font-weight: 700;
    color: #414d5c;
}

.tab-item {
    height: 24px;
    padding: 0 19.5px 0 21px;
    line-height: 24px;
    border-right: 1px solid #c6c6cd;
}

.tab-item.last {
    border-right: none;
}

.tab-item.selected {
    padding: 0 20px;
    color: #0972d3;
    position: relative;
}

.tab-item.selected::after {
    content: "";
    position: absolute;
    left: 0;
    right: 0;
    bottom: -7px;
    height: 4px;
    border-radius: 2px;
    background-color: #0972d3;
}

.dns {
    height: 259px;
    margin-top: 13px;
    padding-top: 12px;
}

.dns-head {
    display: flex;
    align-items: center;
    justify-content: space-between;
    height: 26px;
}

.dns-sub {
    font-size: 16.85px;
    font-weight: 700;
    line-height: 22px;
    margin-top: 12px;
}

.dns-sub a:first-child {
    color: #0972d3;
    font-size: 17.8px;
    font-weight: 500;
    text-decoration: underline;
}

.dns-row {
    margin-top: 17px;
    margin-bottom: 15px;
}

.dns-row label {
    display: block;
    font-size: 13.2px;
    font-weight: 700;
}

.disabled {
    color: #5f6b7a;
}

/* console footer */
.footer {
    height: 31px;
    flex: none;
    background-color: #161d2b;
    border-top: 1px solid #414750;
    display: flex;
    align-items: center;
    padding: 0 16px;
    font-size: 11.7px;
    color: #d5dbdb;
}

.foot-shell {
    margin-left: 6px;
}

.foot-feedback {
    margin-left: 25px;
}

.foot-copy {
    margin-left: auto;
    margin-right: 5px;
    color: #b6bec9;
}

.foot-link {
    margin-left: 25px;
    font-size: 11.4px;
}
```
